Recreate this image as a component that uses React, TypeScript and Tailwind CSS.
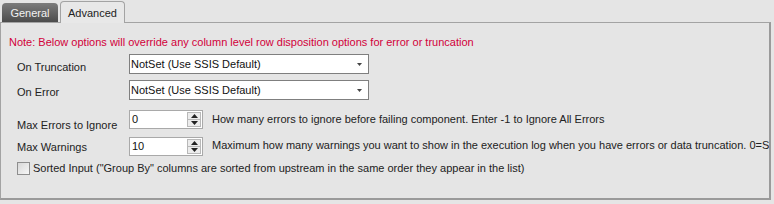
import React from "react";

function Dropdown({ value }: { value: string }) {
  return (
    <div className="w-[240px] h-[20px] shrink-0 bg-white border border-[#7f7f7f] flex items-center pl-[1px] pr-[6px]">
      <span className="flex-1 text-[#111] leading-[14px] pb-[1px]">{value}</span>
      <svg width="5" height="3" viewBox="0 0 5 3">
        <path d="M0 0h5L2.5 3z" fill="#444" />
      </svg>
    </div>
  );
}

function Spinner({ value }: { value: string }) {
  return (
    <div className="w-[74px] h-[19px] shrink-0 bg-white border border-[#a9a9a9] flex items-stretch">
      <span className="flex-1 pl-[2px] leading-[17px] text-[#111]">{value}</span>
      <div className="w-[14px] flex flex-col my-[1px] mr-[1px]">
        <div className="flex-1 bg-[#ececec] border border-[#b8b8b8] flex items-center justify-center">
          <svg width="7" height="4" viewBox="0 0 7 4">
            <path d="M0 4h7L3.5 0z" fill="#222" />
          </svg>
        </div>
        <div className="flex-1 bg-[#ececec] border border-t-0 border-[#b8b8b8] flex items-center justify-center">
          <svg width="7" height="4" viewBox="0 0 7 4">
            <path d="M0 0h7L3.5 4z" fill="#222" />
          </svg>
        </div>
      </div>
    </div>
  );
}

export default function App() {
  return (
    <div
      className="w-[774px] h-[204px] bg-[#e5e5e5] text-[11px] leading-[14px] text-[#222] overflow-hidden"
      style={{ fontFamily: '"Liberation Sans", Arial, sans-serif' }}
    >
      {/* Tabs */}
      <div className="flex items-end h-[22px] pl-[2px] gap-[2px]">
        <div className="w-[56px] h-[19px] rounded-t-[4px] bg-gradient-to-b from-[#7c7c7c] to-[#4c4c4c] text-[#f2f2f2] flex items-center justify-center">
          General
        </div>
        <div className="w-[65px] h-[22px] rounded-t-[4px] bg-[#e8e8e8] border border-b-0 border-[#a3a3a3] flex items-center justify-center text-[#222] -mb-[1px] relative">
          Advanced
        </div>
      </div>

      {/* Panel */}
      <div className="w-[771px] h-[178px] overflow-hidden border border-[#a3a3a3] border-r-[2px] border-b-[2px] border-r-[#9a9a9a] border-b-[#9a9a9a] pl-[8px] pt-[12px]">
        <div className="text-[#d2003a] whitespace-nowrap">
          Note: Below options will override any column level row disposition options for error or truncation
        </div>

        <div className="flex items-center h-[20px] mt-[5px]">
          <span className="w-[120px] shrink-0 pl-[8px] pt-[6px] whitespace-nowrap">On Truncation</span>
          <Dropdown value="NotSet (Use SSIS Default)" />
        </div>

        <div className="flex items-center h-[20px] mt-[6px]">
          <span className="w-[120px] shrink-0 pl-[8px] pt-[4px] whitespace-nowrap">On Error</span>
          <Dropdown value="NotSet (Use SSIS Default)" />
        </div>

        <div className="flex items-center h-[19px] mt-[10px]">
          <span className="w-[120px] shrink-0 pl-[8px] pt-[10px] whitespace-nowrap">Max Errors to Ignore</span>
          <Spinner value="0" />
          <span className="pl-[9px] pb-[2px] whitespace-nowrap">
            How many errors to ignore before failing component. Enter -1 to Ignore All Errors
          </span>
        </div>

        <div className="flex items-center h-[19px] mt-[8px]">
          <span className="w-[120px] shrink-0 pl-[8px] whitespace-nowrap">Max Warnings</span>
          <Spinner value="10" />
          <span className="pl-[9px] pb-[4px] whitespace-nowrap">
            Maximum how many warnings you want to show in the execution log when you have errors or data truncation. 0=Show All
          </span>
        </div>

        <label className="flex items-center h-[14px] mt-[5px] pl-[8px] gap-[3px]">
          <span className="w-[13px] h-[13px] shrink-0 border border-[#8e8e8e] bg-gradient-to-br from-[#d8d8d8] to-[#f7f7f7]" />
          <span className="whitespace-nowrap">
            Sorted Input ("Group By" columns are sorted from upstream in the same order they appear in the list)
          </span>
        </label>
      </div>
    </div>
  );
}
